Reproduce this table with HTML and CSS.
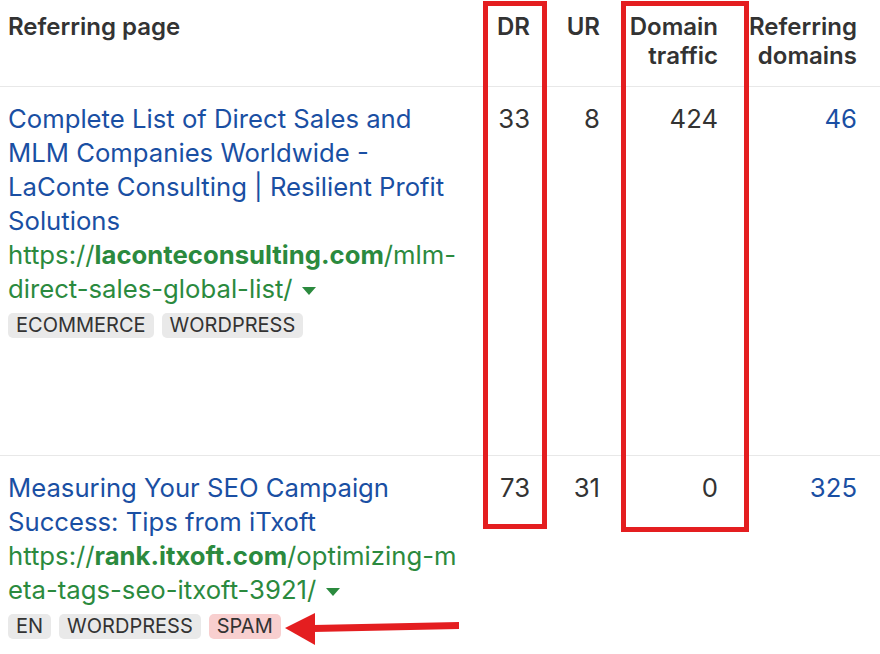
FILE: index.html
```html
<!DOCTYPE html>
<html>
<head>
<meta charset="utf-8">
<link rel="stylesheet" href="styles.css">
</head>
<body>
<div class="wrap">
  <table class="tbl">
    <colgroup>
      <col class="c-page">
      <col class="c-dr">
      <col class="c-ur">
      <col class="c-dt">
      <col class="c-rd">
    </colgroup>
    <thead>
      <tr>
        <th class="th-page">Referring page</th>
        <th class="num">DR</th>
        <th class="num">UR</th>
        <th class="num">Domain traffic</th>
        <th class="num last">Referring domains</th>
      </tr>
    </thead>
    <tbody>
      <tr class="row1">
        <td class="page">
          <a class="title">Complete List of Direct Sales and MLM Companies Worldwide - LaConte Consulting | Resilient Profit Solutions</a>
          <div class="url">https://<b>laconteconsulting.com</b>/mlm-direct-sales-global-list/ <span class="caret"></span></div>
          <div class="tags"><span class="tag">ECOMMERCE</span><span class="tag">WORDPRESS</span></div>
        </td>
        <td class="num">33</td>
        <td class="num">8</td>
        <td class="num">424</td>
        <td class="num last link">46</td>
      </tr>
      <tr class="row2">
        <td class="page">
          <a class="title">Measuring Your SEO Campaign Success: Tips from iTxoft</a>
          <div class="url">https://<b>rank.itxoft.com</b>/optimizing-meta-tags-seo-itxoft-3921/ <span class="caret"></span></div>
          <div class="tags"><span class="tag">EN</span><span class="tag">WORDPRESS</span><span class="tag spam">SPAM</span></div>
        </td>
        <td class="num">73</td>
        <td class="num">31</td>
        <td class="num">0</td>
        <td class="num last link">325</td>
      </tr>
    </tbody>
  </table>
  <div class="mark mark-dr"></div>
  <div class="mark mark-dt"></div>
  <svg class="arrow" width="180" height="36" viewBox="0 0 180 36">
    <polygon points="2,19 32,4 32,36" fill="#e41e20"/>
    <polygon points="30,16 176,13 176,20 30,23" fill="#e41e20"/>
  </svg>
</div>
</body>
</html>
```
FILE: styles.css
```css
html, body {
  margin: 0;
  padding: 0;
  background: #fff;
}
body {
  font-family: Inter, "Noto Sans", sans-serif;
  color: #333;
  width: 880px;
  height: 654px;
  overflow: hidden;
}
.wrap {
  position: relative;
  width: 880px;
  height: 654px;
}
.tbl {
  border-collapse: collapse;
  table-layout: fixed;
  width: 880px;
}
.c-page { width: 470px; }
.c-dr { width: 70px; }
.c-ur { width: 70px; }
.c-dt { width: 118px; }
.c-rd { width: 152px; }
th {
  font-size: 24px;
  font-weight: 600;
  line-height: 29px;
  color: #333;
  vertical-align: top;
  padding: 12px 10px 16px 10px;
  border-bottom: 1px solid #e8e8e8;
  text-align: right;
}
th.th-page {
  text-align: left;
  padding-left: 8px;
}
th.last, td.last { padding-right: 23px; }
td {
  vertical-align: top;
  font-size: 25.7px;
  line-height: 34px;
  padding: 15px 10px 0 10px;
}
td.num { text-align: right; color: #333; }
td.link { color: #1a4fa3; }
td.page {
  padding-left: 8px;
  padding-right: 4px;
}
.row1 td {
  height: 353px;
  border-bottom: 1px solid #e8e8e8;
}
.title {
  display: block;
  color: #1a4fa3;
  text-decoration: none;
}
.url {
  color: #2b8a3e;
  word-break: break-all;
}
.url b { font-weight: 700; }
.caret {
  display: inline-block;
  width: 0;
  height: 0;
  border-left: 7px solid transparent;
  border-right: 7px solid transparent;
  border-top: 8px solid #2b8a3e;
  vertical-align: middle;
  margin-left: 2px;
}
.tags {
  display: flex;
  gap: 8px;
  margin-top: 7px;
}
.tag {
  font-size: 20px;
  line-height: 25px;
  padding: 0 8px;
  border-radius: 5px;
  background: #e9e9e9;
  color: #333;
}
.tag.spam { background: #f8cfcf; }
.mark {
  position: absolute;
  border: 5px solid #e41e20;
  box-sizing: border-box;
}
.mark-dr { left: 483px; top: 1px; width: 64px; height: 528px; }
.mark-dt { left: 621px; top: 1px; width: 128px; height: 531px; }
.arrow {
  position: absolute;
  left: 283px;
  top: 609px;
}
```
